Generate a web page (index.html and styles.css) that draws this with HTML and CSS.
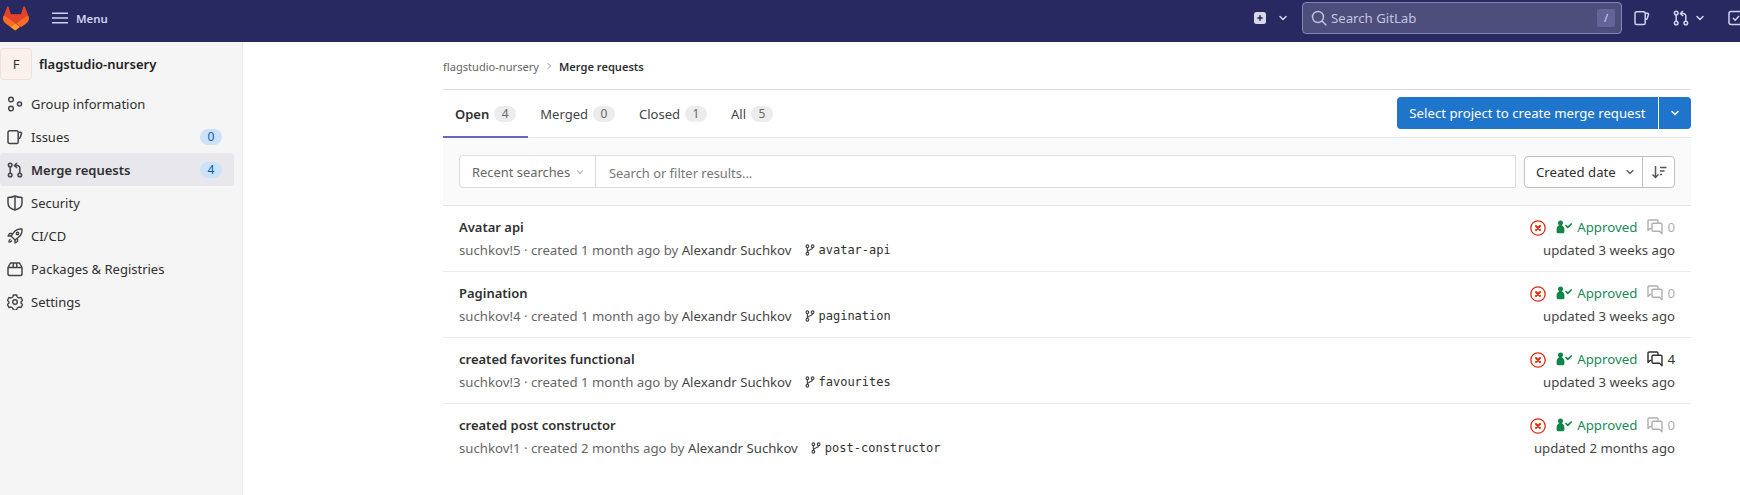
FILE: index.html
```html
<!DOCTYPE html>
<html lang="en">
<head>
<meta charset="utf-8">
<title>Merge requests</title>
<link rel="stylesheet" href="styles.css">
</head>
<body>
<svg class="defs" width="0" height="0" aria-hidden="true">
  <defs>
    <symbol id="i-mr" viewBox="0 0 16 16"><g fill="none" stroke="currentColor" stroke-width="1.5"><circle cx="3.2" cy="3" r="1.8"/><circle cx="3.2" cy="13" r="1.8"/><circle cx="12.8" cy="13" r="1.8"/><path d="M3.2 5v6M12.8 11V6a2.5 2.5 0 0 0-2.5-2.5H8"/><path d="M10 1 7.5 3.5 10 6"/></g></symbol>
    <symbol id="i-issue" viewBox="0 0 16 16"><path fill="none" stroke="currentColor" stroke-width="1.5" stroke-linejoin="round" d="M2.6 1.8h7a1.6 1.6 0 0 1 1.6 1.6v9.6a1.6 1.6 0 0 1-1.6 1.6h-7A1.6 1.6 0 0 1 1 13V3.400a1.600 1.600 0 0 1 1.600-1.600zM11.200 3.200h2.300c.8 0 1.200.7 1 1.400l-1.200 3.600a2 2 0 0 1-2.100 1.400"/></symbol>
    <symbol id="i-chev" viewBox="0 0 16 16"><path fill="none" stroke="currentColor" stroke-width="2" stroke-linecap="round" stroke-linejoin="round" d="m4 6 4 4 4-4"/></symbol>
    <symbol id="i-branch" viewBox="0 0 16 16"><g fill="none" stroke="currentColor" stroke-width="1.500"><circle cx="4.500" cy="3" r="1.800"/><circle cx="4.500" cy="13" r="1.800"/><circle cx="11.500" cy="3" r="1.800"/><path d="M4.500 5v6M11.500 5c0 3-7 2.500-7 6"/></g></symbol>
    <symbol id="i-x" viewBox="0 0 16 16"><circle cx="8" cy="8" r="7.200" fill="#fff" stroke="#dd2b0e" stroke-width="1.300"/><path fill="none" stroke="#dd2b0e" stroke-width="2" stroke-linecap="round" d="m6 6 4 4m0-4-4 4"/></symbol>
    <symbol id="i-approve" viewBox="0 0 16 14"><path fill="currentColor" d="M4.500.6a2.500 2.500 0 0 1 2.500 2.500c0 1-.5 1.700-1.200 2.200C7.500 6 8.400 7.500 8.400 9.800v2c0 .9-.5 1.400-1.300 1.400H1.900c-.8 0-1.300-.5-1.300-1.400v-2c0-2.300.9-3.800 2.600-4.500C2.500 4.800 2 4.100 2 3.100A2.500 2.500 0 0 1 4.500.6z"/><path fill="none" stroke="currentColor" stroke-width="1.700" stroke-linecap="round" stroke-linejoin="round" d="m10 5.500 1.800 1.800 3.400-3.300"/></symbol>
    <symbol id="i-comment" viewBox="0 0 16 16"><g fill="none" stroke="currentColor" stroke-width="1.400" stroke-linejoin="round"><path d="M4.500 9.500H3L1 11.500V2.200C1 1.500 1.500 1 2.200 1h7.600c.7 0 1.200.5 1.200 1.200V4"/><path d="M6.200 4.200h7.600c.7 0 1.200.5 1.200 1.200v9.300l-2.500-2.500H6.200c-.7 0-1.200-.5-1.200-1.200V5.400c0-.7.500-1.200 1.200-1.200z"/></g></symbol>
  </defs>
</svg>

<header class="topbar">
  <div class="top-left">
    <svg class="logo" viewBox="0 0 25 24" width="26" height="25" aria-label="GitLab">
      <path fill="#e24329" d="M24.500 9.700 24.400 9.400 21.100.9c-.1-.2-.2-.3-.4-.4-.4-.2-.9-.1-1.100.3l-.1.200-2.200 6.800H7.600L5.400 1c-.1-.4-.6-.7-1-.5-.2.100-.3.200-.4.400L.6 9.400l-.1.300c-1 2.500-.1 5.300 2 6.900l4.800 3.600 2.400 1.800 1.400 1.100c.3.300.9.300 1.300 0l1.400-1.100 2.400-1.800 4.900-3.600c2.100-1.600 3-4.400 2.300-6.900z"/>
      <path fill="#fc6d26" d="M24.500 9.700 24.400 9.400c-1.600.3-3 1-4.300 2l-7 5.300 4.500 3.400 4.900-3.600c2.100-1.600 3-4.400 2-6.800z"/>
      <path fill="#fca326" d="m7.300 20.100 2.400 1.800 1.400 1.100c.3.300.9.300 1.300 0l1.400-1.100 2.400-1.800-4.500-3.400z"/>
      <path fill="#fc6d26" d="M4.800 11.400c-1.200-1-2.700-1.700-4.200-2l-.1.300c-1 2.500-.1 5.300 2 6.900l4.800 3.500 4.500-3.400z"/>
    </svg>
    <button class="menu-btn">
      <svg class="burger" viewBox="0 0 16 12" width="16" height="12"><path fill="none" stroke="currentColor" stroke-width="1.500" d="M0 1.200h16M0 6h16M0 10.800h16"/></svg>
      <span>Menu</span>
    </button>
  </div>
  <div class="top-right">
    <span class="plus-box"><svg viewBox="0 0 12 12" width="12" height="12"><rect width="12" height="12" rx="2.500" fill="#d8d8ea"/><path d="M6 3.300v5.400M3.300 6h5.400" stroke="#292961" stroke-width="1.600"/></svg></span>
    <svg class="top-chev chev-a"><use href="#i-chev"/></svg>
    <div class="top-search">
      <svg class="search-ico" viewBox="0 0 16 16" width="16" height="16"><circle cx="7" cy="7" r="5.500" fill="none" stroke="currentColor" stroke-width="1.400"/><path d="m11 11 4 4" stroke="currentColor" stroke-width="1.400" stroke-linecap="round"/></svg>
      <span class="top-search-text">Search GitLab</span>
      <kbd class="slash">/</kbd>
    </div>
    <svg class="top-ico issue-ico"><use href="#i-issue"/></svg>
    <svg class="top-ico mr-ico"><use href="#i-mr"/></svg>
    <svg class="top-chev chev-b"><use href="#i-chev"/></svg>
    <svg class="top-ico todo-ico" viewBox="0 0 16 16"><rect x="1" y="1.500" width="14" height="13" rx="2" fill="none" stroke="currentColor" stroke-width="1.500"/><path d="m5 8 2.200 2.200L11 6" fill="none" stroke="currentColor" stroke-width="1.500"/></svg>
  </div>
</header>

<div class="layout">
  <aside class="sidebar">
    <div class="group-head">
      <span class="avatar">F</span>
      <span class="group-name">flagstudio-nursery</span>
    </div>
    <nav class="nav">
      <a class="nav-item"><svg class="nav-ico" viewBox="0 0 16 16"><g fill="none" stroke="currentColor" stroke-width="1.500"><circle cx="4" cy="3.500" r="2.300"/><circle cx="4" cy="12.500" r="2.300"/><circle cx="12.500" cy="8" r="2"/></g></svg><span>Group information</span></a>
      <a class="nav-item"><svg class="nav-ico"><use href="#i-issue"/></svg><span>Issues</span><b class="nav-badge">0</b></a>
      <a class="nav-item active"><svg class="nav-ico"><use href="#i-mr"/></svg><span>Merge requests</span><b class="nav-badge">4</b></a>
      <a class="nav-item"><svg class="nav-ico" viewBox="0 0 16 16"><path fill="none" stroke="currentColor" stroke-width="1.500" stroke-linejoin="round" d="M1 2.500C3.500 2.500 6 2 8 1c2 1 4.500 1.500 7 1.500V8c0 3.500-3 6-7 7-4-1-7-3.500-7-7z"/><path d="M8 1.500v13" stroke="currentColor" stroke-width="1.500"/></svg><span>Security</span></a>
      <a class="nav-item"><svg class="nav-ico" viewBox="0 0 16 16"><g fill="none" stroke="currentColor" stroke-width="1.400" stroke-linejoin="round"><path d="M15 1c-4-.3-7 1.200-9 4.500L4 8l4 4 2.500-2C13.800 8 15.300 5 15 1z"/><path d="M5.500 5.500H2.500L1 8l3 0M10.500 10.500v3L8 15v-3"/><path d="M3.500 11c-1 .7-1.500 2-1.500 3 1 0 2.300-.5 3-1.500"/><circle cx="10.500" cy="5.500" r="1.200"/></g></svg><span>CI/CD</span></a>
      <a class="nav-item"><svg class="nav-ico" viewBox="0 0 16 16"><path fill="none" stroke="currentColor" stroke-width="1.500" stroke-linejoin="round" d="M1 6.500 3.500 2h9L15 6.500V13a1.500 1.500 0 0 1-1.500 1.500h-11A1.500 1.500 0 0 1 1 13zM1 6.500h14M6 6.500 6.500 2M10 6.500 9.500 2"/></svg><span>Packages &amp; Registries</span></a>
      <a class="nav-item"><svg class="nav-ico" viewBox="0 0 16 16"><g fill="none" stroke="currentColor" stroke-width="1.400" stroke-linejoin="round"><path d="M6.300 1h3.400l.5 2 1.700 1 2-.6 1.700 3-1.500 1.400v1.400l1.500 1.400-1.700 3-2-.6-1.700 1-.5 2H6.300l-.5-2-1.700-1-2 .6-1.700-3 1.500-1.400V7.800L.4 6.400l1.700-3 2 .6 1.700-1z"/><circle cx="8" cy="8" r="2.300"/></g></svg><span>Settings</span></a>
    </nav>
  </aside>

  <main class="content">
    <div class="crumbs">
      <span class="crumb">flagstudio-nursery</span>
      <svg class="crumb-sep" viewBox="0 0 8 8" width="8" height="8"><path d="m2.500 1 3 3-3 3" fill="none" stroke="currentColor" stroke-width="1"/></svg>
      <span class="crumb-cur">Merge requests</span>
    </div>
    <div class="tabs-row">
      <ul class="tabs">
        <li class="tab current">Open<b class="count">4</b></li>
        <li class="tab">Merged<b class="count">0</b></li>
        <li class="tab">Closed<b class="count">1</b></li>
        <li class="tab">All<b class="count">5</b></li>
      </ul>
      <div class="split-btn">
        <button class="btn-main">Select project to create merge request</button>
        <button class="btn-caret"><svg class="caret-ico"><use href="#i-chev"/></svg></button>
      </div>
    </div>
    <div class="filter-bar">
      <div class="filter-input">
        <span class="recent">Recent searches<svg class="small-chev"><use href="#i-chev"/></svg></span>
        <span class="filter-text">Search or filter results...</span>
      </div>
      <div class="sort">
        <span class="sort-label">Created date<svg class="small-chev dark"><use href="#i-chev"/></svg></span>
        <span class="sort-dir"><svg viewBox="0 0 16 16" width="16" height="16"><path d="M4.500 2v11M1.500 10.500 4.500 13.500l3-3" fill="none" stroke="currentColor" stroke-width="1.500"/><path d="M9 3.500h6.500M9 7h4.500M9 10.500h2" stroke="currentColor" stroke-width="1.500"/></svg></span>
      </div>
    </div>
    <ul class="mr-list">
      <li class="mr">
        <div class="mr-main">
          <div class="mr-title">Avatar api</div>
          <div class="mr-meta">suchkov!5 · created 1 month ago by <span class="author">Alexandr Suchkov</span><svg class="branch-ico"><use href="#i-branch"/></svg><code class="branch">avatar-api</code></div>
        </div>
        <div class="mr-side">
          <div class="mr-status"><svg class="x-ico"><use href="#i-x"/></svg><span class="approved"><svg class="approve-ico"><use href="#i-approve"/></svg>Approved</span><span class="comments none"><svg class="comment-ico"><use href="#i-comment"/></svg>0</span></div>
          <div class="mr-updated">updated 3 weeks ago</div>
        </div>
      </li>
      <li class="mr">
        <div class="mr-main">
          <div class="mr-title">Pagination</div>
          <div class="mr-meta">suchkov!4 · created 1 month ago by <span class="author">Alexandr Suchkov</span><svg class="branch-ico"><use href="#i-branch"/></svg><code class="branch">pagination</code></div>
        </div>
        <div class="mr-side">
          <div class="mr-status"><svg class="x-ico"><use href="#i-x"/></svg><span class="approved"><svg class="approve-ico"><use href="#i-approve"/></svg>Approved</span><span class="comments none"><svg class="comment-ico"><use href="#i-comment"/></svg>0</span></div>
          <div class="mr-updated">updated 3 weeks ago</div>
        </div>
      </li>
      <li class="mr">
        <div class="mr-main">
          <div class="mr-title">created favorites functional</div>
          <div class="mr-meta">suchkov!3 · created 1 month ago by <span class="author">Alexandr Suchkov</span><svg class="branch-ico"><use href="#i-branch"/></svg><code class="branch">favourites</code></div>
        </div>
        <div class="mr-side">
          <div class="mr-status"><svg class="x-ico"><use href="#i-x"/></svg><span class="approved"><svg class="approve-ico"><use href="#i-approve"/></svg>Approved</span><span class="comments"><svg class="comment-ico"><use href="#i-comment"/></svg>4</span></div>
          <div class="mr-updated">updated 3 weeks ago</div>
        </div>
      </li>
      <li class="mr last">
        <div class="mr-main">
          <div class="mr-title">created post constructor</div>
          <div class="mr-meta">suchkov!1 · created 2 months ago by <span class="author">Alexandr Suchkov</span><svg class="branch-ico"><use href="#i-branch"/></svg><code class="branch">post-constructor</code></div>
        </div>
        <div class="mr-side">
          <div class="mr-status"><svg class="x-ico"><use href="#i-x"/></svg><span class="approved"><svg class="approve-ico"><use href="#i-approve"/></svg>Approved</span><span class="comments none"><svg class="comment-ico"><use href="#i-comment"/></svg>0</span></div>
          <div class="mr-updated">updated 2 months ago</div>
        </div>
      </li>
    </ul>
  </main>
</div>
</body>
</html>
```

FILE: styles.css
```css
* { box-sizing: border-box; }
html, body { margin: 0; padding: 0; height: 100%; overflow: hidden; }
body { font-family: "Noto Sans", "Open Sans", sans-serif; font-size: 13.2px; color: #303030; background: #fff; }
.defs { display: block; height: 0; }
ul { list-style: none; margin: 0; padding: 0; }
button { font: inherit; border: 0; background: none; padding: 0; }

.topbar { height: 42px; background: #292961; display: flex; justify-content: space-between; align-items: center; color: #d1d1f0; overflow: hidden; padding-bottom: 6px; }
.top-left { display: flex; align-items: center; }
.logo { margin-left: 3px; display: block; }
.menu-btn { display: flex; align-items: center; gap: 8px; color: #d1d1f0; margin-left: 23px; font-weight: 600; font-size: 11.4px; }
.burger { display: block; }
.top-right { display: flex; align-items: center; }
.plus-box { display: flex; margin-right: 11px; }
.top-chev { width: 12px; height: 12px; display: block; }
.chev-a { margin-right: 13px; }
.top-search { width: 320px; height: 32px; border: 1px solid #8585b5; border-radius: 4px; background: #4e4e7c; display: flex; align-items: center; padding: 0 6px 0 8px; color: #c4c4e0; }
.search-ico { margin-right: 4px; }
.top-search-text { flex: 1; font-size: 13.2px; }
.slash { width: 18px; height: 18px; background: #64649a; border-radius: 2px; font-family: inherit; font-size: 11px; text-align: center; line-height: 18px; color: #d9d9ee; }
.top-ico { width: 16px; height: 16px; display: block; color: #d1d1f0; }
.issue-ico { margin-left: 12px; }
.mr-ico { margin-left: 23px; }
.chev-b { margin-left: 5px; }
.todo-ico { margin-left: 22px; margin-right: -4px; }

.layout { display: flex; height: 453px; }
.sidebar { width: 243px; flex: none; background: #f5f5f5; border-right: 1px solid #ececec; }
.group-head { display: flex; align-items: center; height: 44px; margin-bottom: 1px; }
.avatar { width: 32px; height: 32px; border: 1px solid #e9e2de; border-radius: 4px; background: #fbf0ec; display: flex; align-items: center; justify-content: center; font-size: 13px; color: #333; }
.group-name { font-weight: 600; margin-left: 7px; font-size: 13px; color: #222; }
.nav { display: flex; flex-direction: column; width: 234px; }
.nav-item { display: flex; align-items: center; height: 33px; padding: 0 12px 0 7px; color: #303030; font-size: 13px; border-radius: 4px; }
.nav-item.active { background: #e7e7ec; font-weight: 600; }
.nav-ico { width: 16px; height: 16px; margin-right: 8px; color: #444; flex: none; }
.nav-badge { margin-left: auto; width: 22px; height: 16px; border-radius: 8px; background: #cbe2f9; color: #0b5cad; font-weight: 400; font-size: 12px; line-height: 16px; text-align: center; }

.content { width: 1248px; margin-left: 200px; flex: none; }
.crumbs { display: flex; align-items: center; height: 47px; font-size: 11.1px; color: #666; padding-top: 1px; }
.crumb-sep { margin: 0 6px; color: #999; }
.crumb-cur { color: #303030; font-weight: 600; }
.tabs-row { display: flex; justify-content: space-between; align-items: center; height: 49px; border-top: 1px solid #dcdcde; border-bottom: 1px solid #e5e5e5; }
.tabs { display: flex; height: 48px; }
.tab { display: flex; align-items: center; height: 48px; padding: 0 12px; font-size: 13px; color: #444; }
.tab.current { font-weight: 600; color: #303030; box-shadow: inset 0 -2px 0 #6666c4; }
.count { font-weight: 400; font-size: 12px; color: #666; background: #ececef; border-radius: 8px; height: 16px; line-height: 16px; min-width: 22px; text-align: center; margin-left: 5px; }
.split-btn { display: flex; height: 32px; margin-top: -2px; }
.btn-main { height: 32px; width: 261px; background: #1f75cb; color: #fff; border-radius: 4px 0 0 4px; font-size: 13.2px; }
.btn-caret { width: 32px; height: 32px; margin-left: 1px; background: #1f75cb; color: #fff; border-radius: 0 4px 4px 0; display: flex; align-items: center; justify-content: center; }
.caret-ico { width: 12px; height: 12px; }
.filter-bar { height: 68px; background: #fafafa; border-bottom: 1px solid #e5e5e5; display: flex; align-items: center; padding: 0 16px; }
.filter-input { flex: 1; display: flex; height: 33px; background: #fff; border: 1px solid #dcdcde; border-radius: 4px 0 0 4px; margin-right: 8px; }
.recent { width: 136px; flex: none; display: flex; align-items: center; padding-left: 12px; border-right: 1px solid #dcdcde; color: #666; font-size: 12.9px; }
.small-chev { width: 10px; height: 10px; margin-left: 5px; color: #bbb; }
.small-chev.dark { width: 12px; height: 12px; margin-left: 8px; color: #666; }
.filter-text { display: flex; align-items: center; padding: 2px 0 0 13px; color: #777; font-size: 12.9px; }
.sort { display: flex; height: 32px; width: 151px; background: #fff; border: 1px solid #bfbfc3; border-radius: 4px; }
.sort-label { flex: 1; display: flex; align-items: center; padding-left: 11px; color: #303030; font-size: 13.2px; border-right: 1px solid #bfbfc3; }
.sort-dir { width: 31px; flex: none; display: flex; align-items: center; justify-content: center; color: #555; }

.mr { height: 66px; border-bottom: 1px solid #ececef; display: flex; justify-content: space-between; padding: 11px 16px 0; }
.mr.last { border-bottom: 0; }
.mr-title { font-weight: 600; font-size: 13px; line-height: 20px; color: #303030; }
.mr-meta { display: flex; align-items: center; font-size: 13.2px; line-height: 20px; color: #666; margin-top: 3px; white-space: pre-wrap; }
.author { color: #444; }
.branch-ico { width: 12px; height: 12px; color: #444; margin-left: 12px; margin-right: 3px; }
.branch { font-family: "DejaVu Sans Mono", "Liberation Mono", monospace; font-size: 12px; color: #303030; }
.mr-side { display: flex; flex-direction: column; align-items: flex-end; }
.mr-status { display: flex; align-items: center; height: 20px; }
.x-ico { width: 16px; height: 16px; margin-top: 1px; }
.approved { display: flex; align-items: center; margin-left: 10px; font-size: 13.3px; color: #1b8a5a; }
.approve-ico { width: 16px; height: 14px; margin-right: 5px; color: #108548; }
.comments { display: flex; align-items: center; margin-left: 10px; color: #303030; font-size: 13.2px; }
.comments.none { color: #b0b0b0; }
.comment-ico { width: 16px; height: 16px; margin-right: 4px; }
.mr-updated { margin-top: 3px; line-height: 20px; font-size: 13.2px; color: #444; }
```
